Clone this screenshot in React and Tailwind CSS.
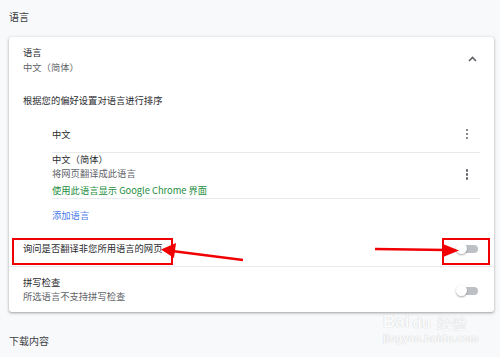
import React from 'react';

const Kebab = () => (
  <div className="flex flex-col items-center gap-[1.5px] w-[6px]">
    <span className="w-[2.5px] h-[2.5px] rounded-full bg-[#5f6368]" />
    <span className="w-[2.5px] h-[2.5px] rounded-full bg-[#5f6368]" />
    <span className="w-[2.5px] h-[2.5px] rounded-full bg-[#5f6368]" />
  </div>
);

const Toggle = () => (
  <div className="relative w-[22px] h-[10px] flex items-center">
    <div className="absolute left-[3px] right-0 h-[8px] rounded-full bg-[#bdc1c6]" />
    <div className="absolute left-0 w-[11px] h-[11px] rounded-full bg-white shadow-[0_1px_2px_rgba(0,0,0,0.35)]" />
  </div>
);

const App = () => {
  return (
    <div className="relative w-[500px] h-[357px] overflow-hidden bg-[#f8f9fa] text-[#2a2b2e] font-['Noto_Sans_CJK_SC','Noto_Sans',sans-serif] text-[9.3px]">
      <div className="px-[9px]">
        {/* 页面标题 */}
        <div className="h-[37px] pt-[10px] text-[10px] leading-[14px] text-[#3c4043]">语言</div>

        <div className="w-[485px] bg-white rounded-[3px] shadow-[0_1px_2px_rgba(60,64,67,0.3),0_1px_3px_1px_rgba(60,64,67,0.15)]">
          {/* 语言 折叠头 */}
          <div className="h-[45px] pl-[14px] pr-[17px] flex items-center justify-between">
            <div className="leading-[15px]">
              <div>语言</div>
              <div className="text-[#5f6368]">中文（简体）</div>
            </div>
            <svg width="9" height="6" viewBox="0 0 9 6" className="mt-[-2px]">
              <path d="M1 5 L4.5 1.5 L8 5" fill="none" stroke="#5f6368" strokeWidth="1.6" />
            </svg>
          </div>

          <div className="pl-[14px]">
            <div className="mt-[12px] leading-[12px]">根据您的偏好设置对语言进行排序</div>

            <div className="ml-[29px] mr-[14px]">
              <div className="pt-[22px] pb-[12px] leading-[12px] flex items-center justify-between border-b border-[#e8eaed] pr-[10px]">
                <div>中文</div>
                <Kebab />
              </div>
              <div className="pb-[2px] flex items-center justify-between border-b border-[#e8eaed] pr-[10px]">
                <div>
                  <div className="leading-[13.5px]">中文（简体）</div>
                  <div className="leading-[13.5px] text-[#5f6368]">将网页翻译成此语言</div>
                  <div className="mt-[4px] leading-[12px] text-[#1e8e3e]">使用此语言显示 Google Chrome 界面</div>
                </div>
                <Kebab />
              </div>
              <div className="pt-[10px] pb-[10px] leading-[12px] text-[#4a7be8]">添加语言</div>
            </div>
          </div>

          {/* 翻译询问 */}
          <div className="h-[36px] pl-[14px] pr-[16px] flex items-center justify-between border-b border-[#e8eaed]">
            <div>询问是否翻译非您所用语言的网页</div>
            <Toggle />
          </div>

          {/* 拼写检查 */}
          <div className="h-[45px] pl-[14px] pr-[16px] flex items-center justify-between">
            <div className="leading-[13.5px]">
              <div>拼写检查</div>
              <div className="text-[#5f6368]">所选语言不支持拼写检查</div>
            </div>
            <div className="mt-[2px]">
              <Toggle />
            </div>
          </div>
        </div>

        <div className="mt-[23px] text-[10px] leading-[12px] text-[#3c4043]">下载内容</div>
      </div>

      {/* 红色标注 */}
      <div className="absolute left-[12px] top-[238px] w-[161px] h-[27px] border-[2.5px] border-[#f00000]" />
      <div className="absolute left-[442px] top-[238px] w-[48px] h-[27px] border-[2.5px] border-[#f00000]" />
      <svg className="absolute left-0 top-0" width="500" height="357" viewBox="0 0 500 357">
        <line x1="243" y1="260" x2="172" y2="251" stroke="#f00000" strokeWidth="2.5" />
        <polygon points="161,249.5 176,243 174,258" fill="#f00000" />
        <line x1="375" y1="249" x2="446" y2="250" stroke="#f00000" strokeWidth="2.5" />
        <polygon points="459,250.5 443,244 443,257" fill="#f00000" />
      </svg>

      {/* 水印 */}
      <div className="absolute left-[383px] top-[313px] text-[#fbfbfb] font-['Liberation_Sans',sans-serif] [text-shadow:0_0_1px_#d4d6d9,0_0_1px_#d4d6d9] leading-none">
        <div className="flex items-end gap-[1px]">
          <span className="text-[17px] font-bold">Bai</span>
          <span className="text-[15px] font-bold px-[2px] rounded-[3px]">du</span>
          <span className="text-[15px] font-['Noto_Sans_CJK_SC',sans-serif] ml-[3px]">经验</span>
        </div>
        <div className="mt-[3px] text-[10.5px] font-bold tracking-[0.2px]">jingyan.baidu.com</div>
      </div>
    </div>
  );
};

export default App;
